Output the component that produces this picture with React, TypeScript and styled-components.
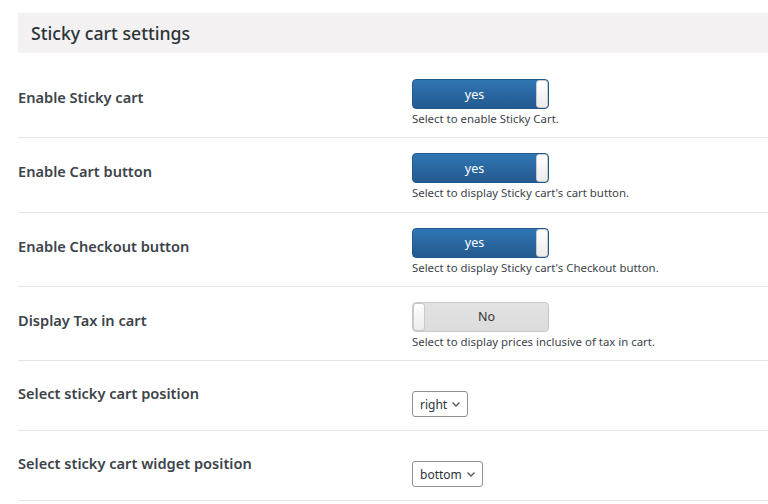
import styled, { createGlobalStyle } from "styled-components";

const GlobalStyle = createGlobalStyle`
  body {
    margin: 0;
    background: #ffffff;
    font-family: "Noto Sans", "Open Sans", sans-serif;
    color: #3c434a;
  }
`;

const Page = styled.div`
  padding: 13px 0 0 18px;
`;

const Header = styled.div`
  height: 40px;
  background: #f3f1f1;
  display: flex;
  align-items: center;
  padding-left: 13px;
  font-size: 17.7px;
  font-weight: 500;
  color: #2c3338;
`;

const Table = styled.div`
  margin-top: 11px;
`;

const Row = styled.div`
  display: grid;
  grid-template-columns: 394px 1fr;
  border-bottom: 1px solid #e4e4e4;
`;

const Label = styled.div<{ $select?: boolean }>`
  padding-top: ${(p) => (p.$select ? "22px" : "23px")};
  font-size: 14.6px;
  font-weight: 600;
  line-height: 20px;
  color: #3c434a;
`;

const Control = styled.div<{ $select?: boolean }>`
  padding: ${(p) => (p.$select ? "30px 0 13px" : "15px 0 11.3px")};
  display: flex;
  flex-direction: column;
  align-items: flex-start;
`;

const Toggle = styled.div<{ $on: boolean }>`
  position: relative;
  width: 137px;
  height: 30px;
  box-sizing: border-box;
  border-radius: 4px;
  border: 1px solid ${(p) => (p.$on ? "#22588c" : "#c8c8c8")};
  background: ${(p) =>
    p.$on ? "linear-gradient(#2f76b3, #24598f)" : "linear-gradient(#e2e2e2, #dcdcdc)"};
  display: flex;
  align-items: center;
  justify-content: center;
  padding: ${(p) => (p.$on ? "0 12px 0 0" : "0 0 0 12px")};
  font-size: 12.5px;
  color: ${(p) => (p.$on ? "#ffffff" : "#333333")};
`;

const Knob = styled.span<{ $on: boolean }>`
  position: absolute;
  top: 0;
  bottom: 0;
  ${(p) => (p.$on ? "right: 0;" : "left: 0;")}
  width: 12px;
  background: linear-gradient(#ffffff, #ececec);
  border-radius: 3px;
  border: 1px solid #c9c9c9;
  box-sizing: border-box;
`;

const Help = styled.p`
  margin: 3px 0 0;
  font-size: 11.4px;
  line-height: 14px;
  color: #3c434a;
`;

const Select = styled.div`
  height: 26px;
  box-sizing: border-box;
  border: 1px solid #8c8f94;
  border-radius: 3px;
  padding: 0 6px 0 7px;
  display: flex;
  align-items: center;
  gap: 4px;
  font-size: 12px;
  color: #2c3338;
`;

const Chevron = () => (
  <svg width="10" height="10" viewBox="0 0 10 10" fill="none">
    <path d="M1.5 3.5 L5 7 L8.5 3.5" stroke="#50575e" strokeWidth="1.3" />
  </svg>
);

const toggles = [
  { label: "Enable Sticky cart", on: true, help: "Select to enable Sticky Cart." },
  { label: "Enable Cart button", on: true, help: "Select to display Sticky cart's cart button." },
  { label: "Enable Checkout button", on: true, help: "Select to display Sticky cart's Checkout button." },
  { label: "Display Tax in cart", on: false, help: "Select to display prices inclusive of tax in cart." },
];

const selects = [
  { label: "Select sticky cart position", value: "right" },
  { label: "Select sticky cart widget position", value: "bottom" },
];

const App = () => {
  return (
    <Page>
      <GlobalStyle />
      <Header>Sticky cart settings</Header>
      <Table>
        {toggles.map((t) => (
          <Row key={t.label}>
            <Label>{t.label}</Label>
            <Control>
              <Toggle $on={t.on}>
                {t.on ? "yes" : "No"}
                <Knob $on={t.on} />
              </Toggle>
              <Help>{t.help}</Help>
            </Control>
          </Row>
        ))}
        {selects.map((s) => (
          <Row key={s.label}>
            <Label $select>{s.label}</Label>
            <Control $select>
              <Select>
                {s.value}
                <Chevron />
              </Select>
            </Control>
          </Row>
        ))}
      </Table>
    </Page>
  );
};

export default App;
